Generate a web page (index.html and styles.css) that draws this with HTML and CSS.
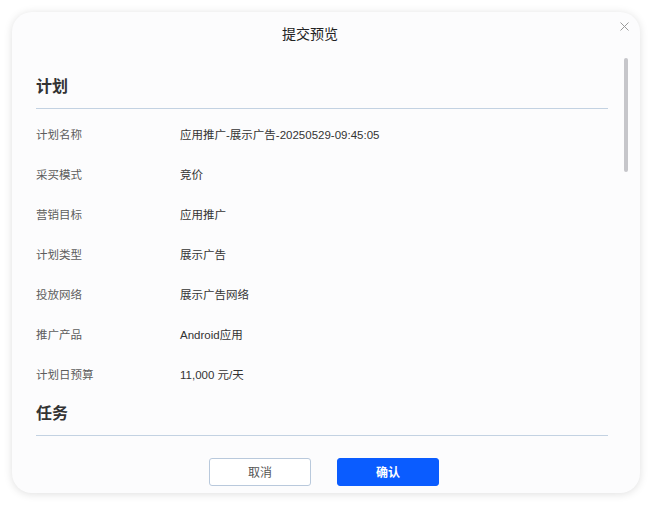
FILE: index.html
```html
<!DOCTYPE html>
<html lang="zh-CN">
<head>
  <meta charset="UTF-8">
  <meta name="viewport" content="width=device-width, initial-scale=1.0">
  <title>提交预览</title>
  <link rel="stylesheet" href="styles.css">
</head>
<body>
  <div class="page">
    <div class="modal">
      <div class="modal-header">
        <span class="modal-title">提交预览</span>
        <button class="modal-close" aria-label="关闭">
          <svg width="9" height="9" viewBox="0 0 9 9">
            <path d="M0.5 0.5 L8.5 8.5 M8.5 0.5 L0.5 8.5" stroke="#9a9a9a" stroke-width="1" fill="none"/>
          </svg>
        </button>
      </div>

      <!-- Inhalt mit eigenem Scrollbalken -->
      <div class="modal-body">
        <div class="section">
          <h2 class="section-title">计划</h2>
          <div class="row"><span class="label">计划名称</span><span class="value">应用推广-展示广告-20250529-09:45:05</span></div>
          <div class="row"><span class="label">采买模式</span><span class="value">竞价</span></div>
          <div class="row"><span class="label">营销目标</span><span class="value">应用推广</span></div>
          <div class="row"><span class="label">计划类型</span><span class="value">展示广告</span></div>
          <div class="row"><span class="label">投放网络</span><span class="value">展示广告网络</span></div>
          <div class="row"><span class="label">推广产品</span><span class="value">Android应用</span></div>
          <div class="row"><span class="label">计划日预算</span><span class="value">11,000 元/天</span></div>
        </div>
        <div class="section">
          <h2 class="section-title">任务</h2>
        </div>
        <div class="scroll-thumb"></div>
      </div>

      <div class="modal-footer">
        <button class="btn btn-cancel">取消</button>
        <button class="btn btn-primary">确认</button>
      </div>
    </div>
  </div>
</body>
</html>
```

FILE: styles.css
```css
body {
  font-family: "Noto Sans", "Noto Sans CJK SC", sans-serif;
  margin: 0;
  padding: 0;
  background-color: #fff;
  color: #333;
}

.page {
  padding: 12px;
}

.modal {
  position: relative;
  display: flex;
  flex-direction: column;
  width: 628px;
  height: 481px;
  background: #fcfcfd;
  border-radius: 20px;
  box-shadow: 0 1px 8px rgba(0, 0, 0, 0.13);
  overflow: hidden;
}

.modal-header {
  height: 42px;
  line-height: 42px;
  text-align: center;
  padding-right: 32px;
  flex-shrink: 0;
}

.modal-title {
  font-size: 14px;
  color: #222;
}

.modal-close {
  position: absolute;
  top: 7px;
  right: 11px;
  width: 10px;
  height: 10px;
  padding: 0;
  border: none;
  background: none;
  cursor: pointer;
}

.modal-body {
  position: relative;
  flex: 1;
  overflow: hidden;
  padding: 20px 32px 0 24px;
}

.section + .section {
  margin-top: 7px;
}

.section-title {
  margin: 0;
  font-size: 16px;
  line-height: 24px;
  font-weight: bold;
  color: #333;
  padding-bottom: 10px;
  border-bottom: 1px solid #c3d2e2;
  margin-bottom: 5px;
}

.row {
  display: flex;
  align-items: center;
  height: 40px;
  font-family: "Liberation Sans", "Noto Sans CJK SC", sans-serif;
  font-size: 11.5px;
}

.label {
  width: 144px;
  color: #5c5c5c;
}

.value {
  color: #333;
}

.scroll-thumb {
  position: absolute;
  top: 4px;
  right: 12px;
  width: 4px;
  height: 114px;
  border-radius: 2px;
  background: #c6c6ca;
}

.modal-footer {
  flex-shrink: 0;
  display: flex;
  justify-content: center;
  gap: 26px;
  padding: 13px 4px 7px 0;
}

.btn {
  width: 102px;
  height: 28px;
  border-radius: 3px;
  font-family: inherit;
  font-size: 12px;
  cursor: pointer;
}

.btn-cancel {
  background: #fff;
  border: 1px solid #b9c9dc;
  color: #555;
}

.btn-primary {
  background: #0a5cff;
  border: 1px solid #0a5cff;
  color: #fff;
  font-weight: bold;
}
```
